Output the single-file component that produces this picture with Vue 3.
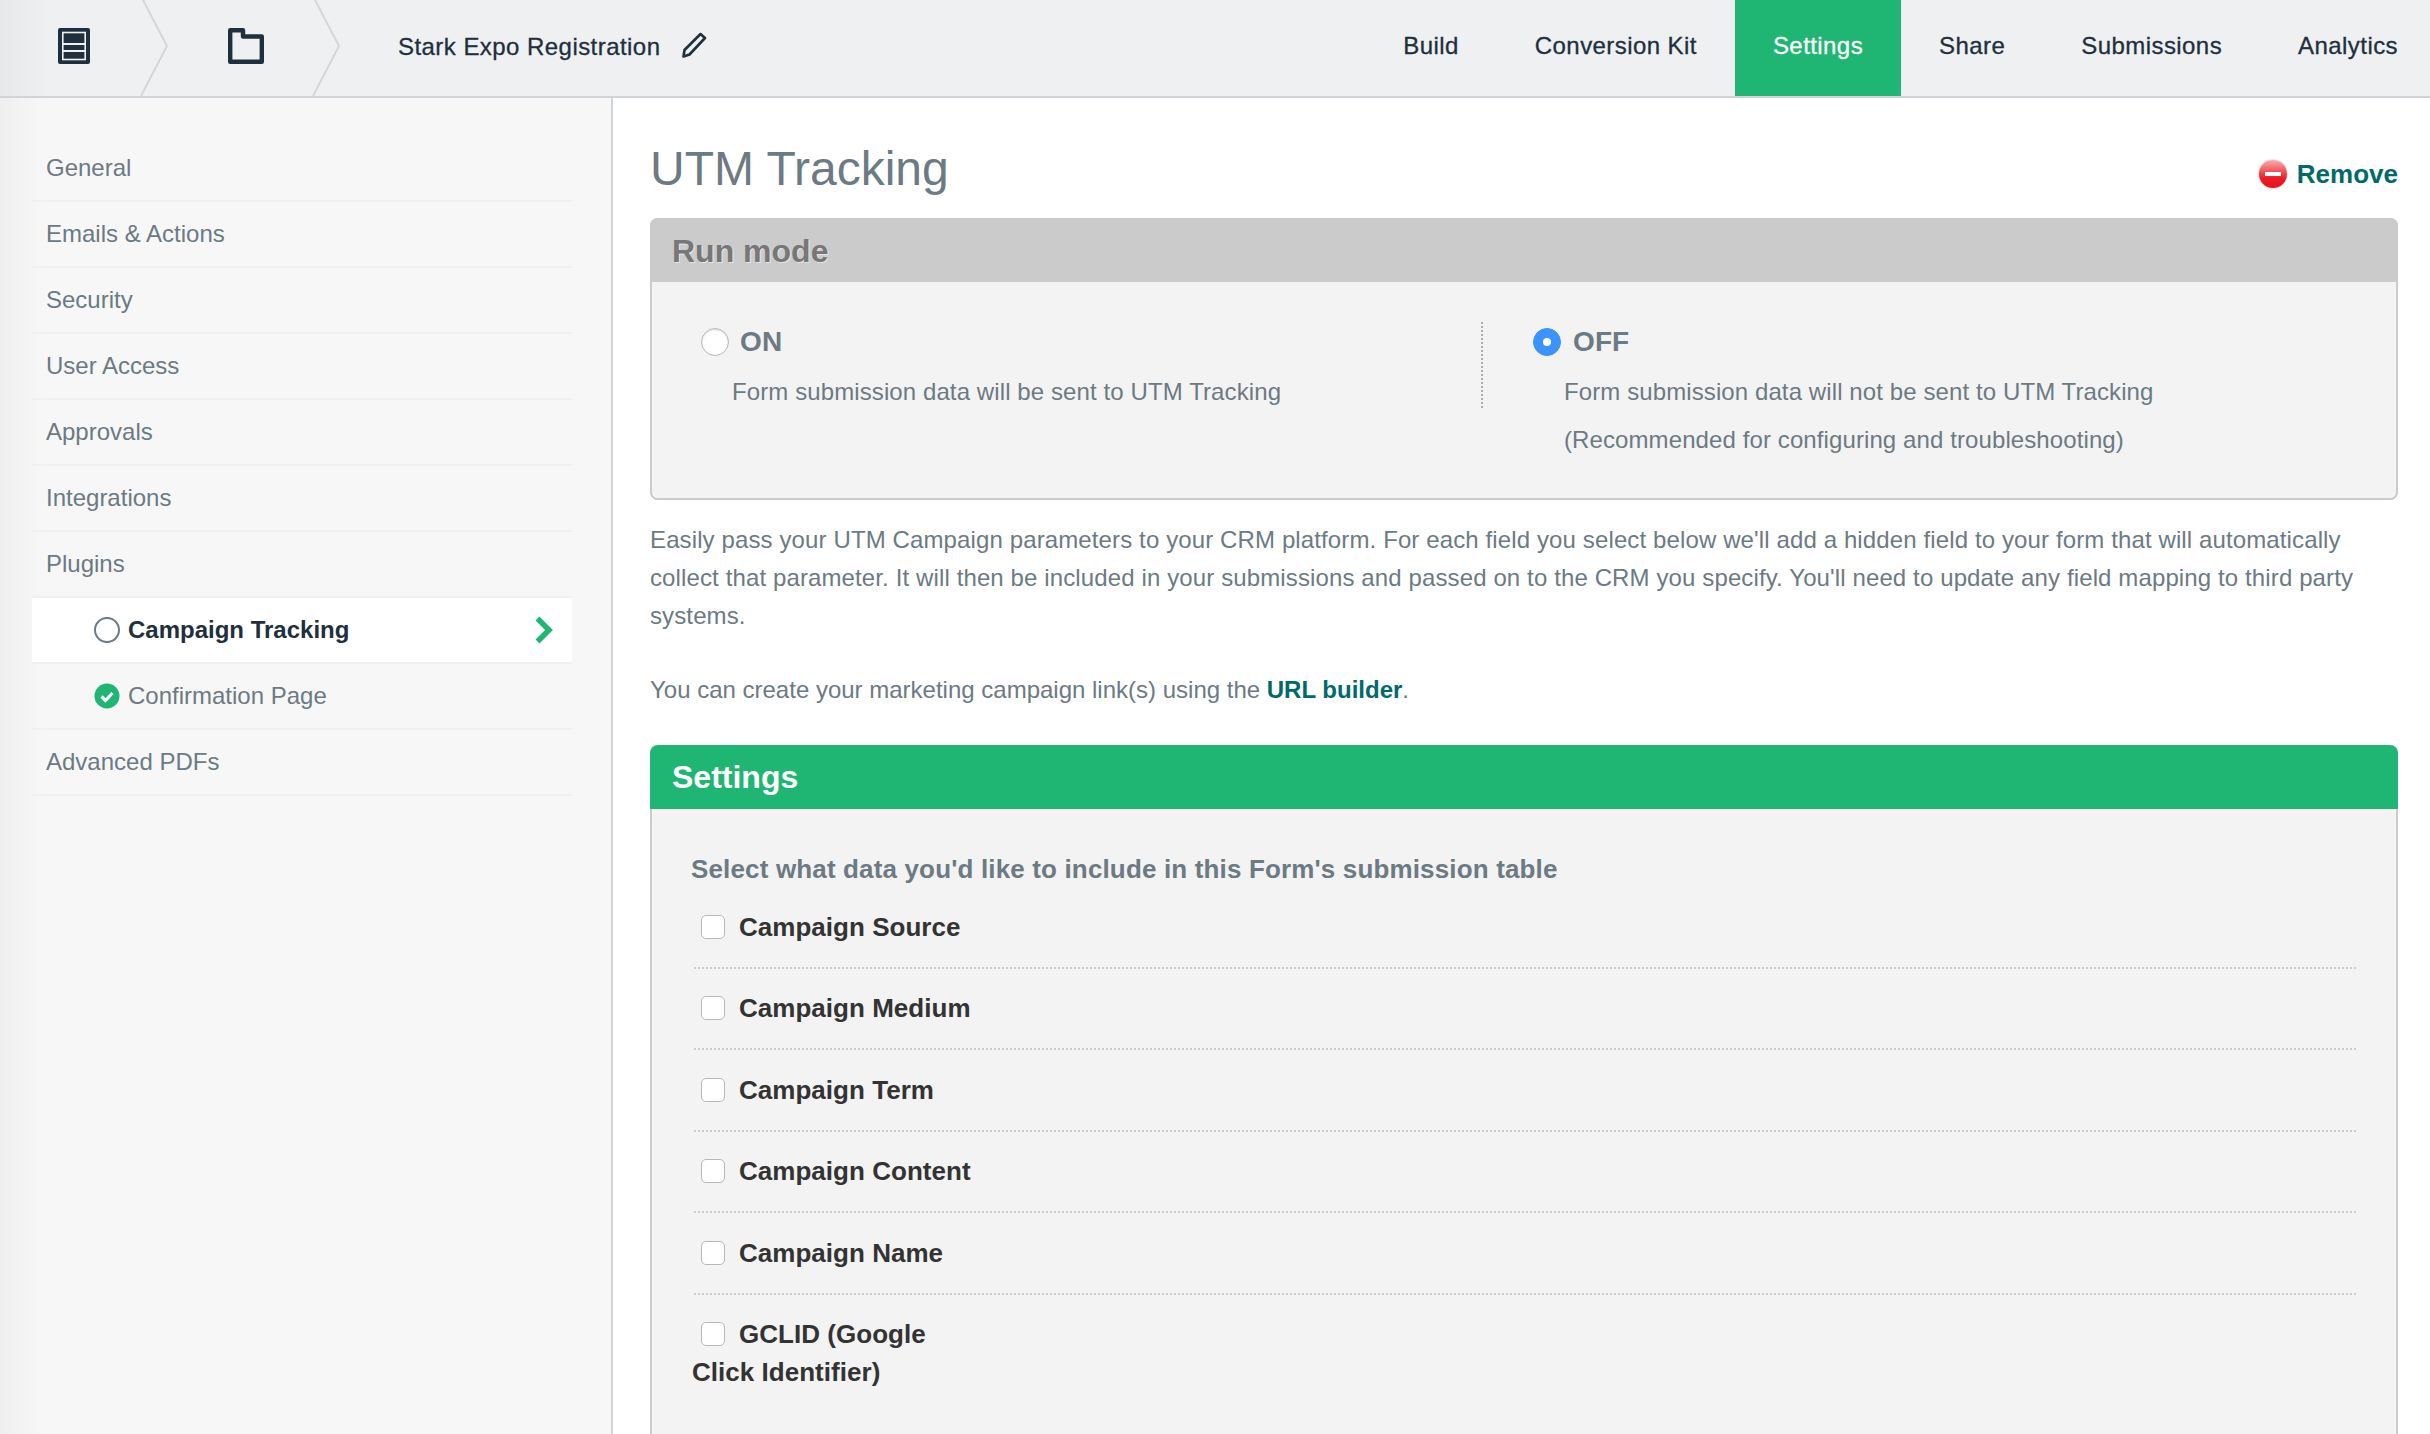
<template>
  <div class="page">
    <header class="topbar">
      <div class="crumbs">
        <div class="crumb first">
          <svg width="32" height="36" viewBox="0 0 32 36">
            <rect width="32" height="36" rx="2" fill="#1f2f3d" />
            <rect x="4.800" y="4.500" width="22.400" height="27" fill="none" stroke="#eef0f2" stroke-width="1.600" />
            <path d="M5 16h22M5 23h22" stroke="#eef0f2" stroke-width="1.800" />
          </svg>
          <svg class="chev" width="28" height="96" viewBox="0 0 28 96">
            <path d="M3 0l24 46L1 96" fill="none" stroke="#d3d7db" stroke-width="2" />
          </svg>
        </div>
        <div class="crumb second">
          <svg width="36" height="36" viewBox="0 0 36 36">
            <path d="M2.200 2.200H15V8.500H33.800V33.800H2.200z" fill="none" stroke="#1f2f3d" stroke-width="4.400" stroke-linejoin="round" />
          </svg>
          <svg class="chev" width="28" height="96" viewBox="0 0 28 96">
            <path d="M3 0l24 46L1 96" fill="none" stroke="#d3d7db" stroke-width="2" />
          </svg>
        </div>
        <div class="form-name">
          <span>Stark Expo Registration</span>
          <svg width="26" height="26" viewBox="0 0 26 26">
            <path d="M19.500 2l4.500 4L8.500 22.500 2.500 24.500l1-6.500z" fill="none" stroke="#1f2f3d" stroke-width="2.600" stroke-linejoin="round" />
          </svg>
        </div>
      </div>
      <nav class="tabs">
        <a v-for="t in tabs" :key="t" class="tab" :class="{ active: t === 'Settings' }">{{ t }}</a>
      </nav>
    </header>

    <div class="body">
      <aside class="sidebar">
        <ul class="menu">
          <li v-for="m in menu" :key="m.label" class="item" :class="{ sub: m.sub, current: m.current }">
            <span v-if="m.sub && m.current" class="ring"></span>
            <svg v-if="m.sub && !m.current" class="ok" width="26" height="26" viewBox="0 0 26 26">
              <circle cx="13" cy="13" r="12.500" fill="#1fb573" />
              <path d="M7.500 13.500l4 4 7-7.500" fill="none" stroke="#fff" stroke-width="3.200" />
            </svg>
            <span class="item-label">{{ m.label }}</span>
            <svg v-if="m.current" class="go" width="20" height="28" viewBox="0 0 20 28">
              <path d="M3.500 2.500L15 14 3.500 25.500" fill="none" stroke="#1fb573" stroke-width="5.500" />
            </svg>
          </li>
        </ul>
      </aside>

      <main class="content">
        <div class="title-row">
          <h1>UTM Tracking</h1>
          <a class="remove">
            <span class="remove-icon"></span>
            Remove
          </a>
        </div>

        <section class="panel run-panel">
          <h2 class="panel-head grey">Run mode</h2>
          <div class="run-body">
            <div class="run-col on-col">
              <div class="run-opt"><span class="radio"></span>ON</div>
              <p>Form submission data will be sent to UTM Tracking</p>
            </div>
            <div class="run-col off-col">
              <div class="run-opt"><span class="radio checked"></span>OFF</div>
              <p>Form submission data will not be sent to UTM Tracking</p>
              <p>(Recommended for configuring and troubleshooting)</p>
            </div>
          </div>
        </section>

        <p class="intro">
          Easily pass your UTM Campaign parameters to your CRM platform. For each field you select below we'll add a hidden field to your form that will automatically collect that parameter. It will then be included in your submissions and passed on to the CRM you specify. You'll need to update any field mapping to third party systems.
        </p>
        <p class="intro link-line">
          You can create your marketing campaign link(s) using the <a>URL builder</a>.
        </p>

        <section class="panel settings-panel">
          <h2 class="panel-head green">Settings</h2>
          <div class="settings-body">
            <h3>Select what data you'd like to include in this Form's submission table</h3>
            <div v-for="f in fields" :key="f" class="field">
              <label><span class="check"></span>{{ f }}</label>
            </div>
          </div>
        </section>
      </main>
    </div>
  </div>
</template>

<script setup>
const tabs = ["Build", "Conversion Kit", "Settings", "Share", "Submissions", "Analytics"]

const menu = [
  { label: "General" },
  { label: "Emails & Actions" },
  { label: "Security" },
  { label: "User Access" },
  { label: "Approvals" },
  { label: "Integrations" },
  { label: "Plugins" },
  { label: "Campaign Tracking", sub: true, current: true },
  { label: "Confirmation Page", sub: true },
  { label: "Advanced PDFs" }
]

const fields = [
  "Campaign Source",
  "Campaign Medium",
  "Campaign Term",
  "Campaign Content",
  "Campaign Name",
  "GCLID (Google Click Identifier)"
]
</script>

<style>
html, body {
  margin: 0;
  background: #fff;
  overflow: hidden;
}
</style>

<style scoped>
.page {
  width: 2430px;
  height: 1434px;
  overflow: hidden;
  font-family: "Liberation Sans", Arial, sans-serif;
  font-size: 24px;
  color: #6c7a83;
}

/* barra superiore */
.topbar {
  display: flex;
  justify-content: space-between;
  height: 96px;
  background: linear-gradient(90deg, #e6e8e9 0, #eef0f2 50px);
  border-bottom: 2px solid #d0d4d8;
}
.crumbs {
  display: flex;
  align-items: center;
}
.crumb {
  position: relative;
  height: 96px;
  display: flex;
  align-items: center;
  padding-bottom: 4px;
  box-sizing: border-box;
}
.crumb.first {
  width: 168px;
  padding-left: 58px;
}
.crumb.second {
  width: 172px;
  padding-left: 60px;
}
.chev {
  position: absolute;
  right: 0;
  top: 0;
}
.form-name {
  display: flex;
  align-items: center;
  gap: 21px;
  margin-left: 58px;
  padding-bottom: 3px;
  color: #1f2f3d;
  letter-spacing: 0.45px;
  -webkit-text-stroke: 0.3px #1f2f3d;
}
.form-name svg {
  margin-top: -3px;
}
.tabs {
  display: flex;
  margin-right: -6px;
}
.tab {
  padding: 0 38px;
  line-height: 92px;
  height: 96px;
  color: #1f2f3d;
  letter-spacing: 0.43px;
  -webkit-text-stroke: 0.3px #1f2f3d;
}
.tab.active {
  background: #1fb573;
  color: #fff;
  -webkit-text-stroke: 0.3px #fff;
}

.body {
  display: flex;
}

/* menu laterale */
.sidebar {
  width: 611px;
  height: 1336px;
  flex: none;
  background: linear-gradient(90deg, #efefef 0, #f7f7f7 45px);
  border-right: 2px solid #d0d4d8;
}
.menu {
  list-style: none;
  margin: 38px 39px 0 32px;
  padding: 0;
}
.item {
  display: flex;
  align-items: center;
  height: 64px;
  padding-left: 14px;
  border-bottom: 2px solid #f0f0f0;
}
.item.sub {
  padding-left: 62px;
}
.item.current {
  background: #fff;
  color: #1f2f3d;
  font-weight: bold;
}
.item-label {
  flex: 1;
}
.ring {
  width: 22px;
  height: 22px;
  border: 2px solid #6c7a83;
  border-radius: 50%;
  margin-right: 8px;
}
.ok {
  margin-right: 8px;
}
.go {
  margin-right: 18px;
}

/* contenuto */
.content {
  flex: 1;
  min-width: 0;
  padding: 0 32px 0 37px;
  letter-spacing: 0.1px;
}
.title-row {
  display: flex;
  justify-content: space-between;
  align-items: flex-end;
  height: 120px;
  letter-spacing: 0;
}
h1 {
  margin: 0 0 21px;
  font-size: 48px;
  font-weight: normal;
  line-height: 56px;
}
.remove {
  display: flex;
  align-items: center;
  gap: 10px;
  margin-bottom: 29px;
  font-size: 26px;
  font-weight: bold;
  line-height: 30px;
  color: #006a68;
}
.remove-icon {
  position: relative;
  width: 28px;
  height: 28px;
  border-radius: 50%;
  background: linear-gradient(180deg, #f9aeb2 0, #f0555c 40%, #ee1c25 65%, #e8121c 100%);
  box-shadow: 0 0 2px #e89a9a;
}
.remove-icon::after {
  content: "";
  position: absolute;
  left: 6px;
  right: 6px;
  top: 12px;
  height: 4px;
  background: #fff;
}

.panel-head {
  margin: 0;
  height: 64px;
  padding-left: 22px;
  font-size: 32px;
  font-weight: bold;
  line-height: 64px;
  border-radius: 8px 8px 0 0;
  letter-spacing: 0;
}
.panel-head.grey {
  background: #cbcbcb;
  color: #777;
  line-height: 66px;
  text-shadow: 1px 1px 0 #e6e6e6;
}
.panel-head.green {
  background: #1fb573;
  color: #fff;
}

.run-panel {
  height: 282px;
  background: #f3f3f3;
  border-radius: 8px;
  box-shadow: inset 2px 0 0 #ccc, inset -2px 0 0 #ccc, inset 0 -2px 0 #ccc;
}
.run-body {
  display: flex;
  padding-top: 40px;
}
.run-col {
  height: 86px;
}
.on-col {
  width: 833px;
  padding-left: 51px;
  box-sizing: border-box;
  border-right: 2px dotted #aaa;
}
.off-col {
  padding-left: 50px;
}
.run-opt {
  display: flex;
  align-items: center;
  gap: 12px;
  height: 36px;
  margin-top: 2px;
  font-size: 28px;
  font-weight: bold;
}
.on-col .run-opt {
  gap: 11px;
}
.run-col p {
  margin: 0;
  line-height: 48px;
  white-space: nowrap;
}
.on-col p {
  margin: 8px 0 0 31px;
}
.off-col p {
  margin-left: 31px;
}
.off-col .run-opt + p {
  margin-top: 8px;
}
.radio {
  width: 26px;
  height: 26px;
  border: 1px solid #b8b8b8;
  border-radius: 50%;
  background: #fff;
  box-shadow: inset 0 1px 2px rgba(0, 0, 0, 0.15);
}
.radio.checked {
  position: relative;
  border-color: #3b93fb;
  background: #3b93fb;
  box-shadow: none;
}
.radio.checked::after {
  content: "";
  position: absolute;
  left: 9px;
  top: 9px;
  width: 8px;
  height: 8px;
  border-radius: 50%;
  background: #fff;
}

.intro {
  margin: 0;
  padding-top: 21px;
  line-height: 38px;
  letter-spacing: 0.12px;
}
.link-line {
  padding-top: 36px;
  letter-spacing: 0;
}
.link-line a {
  color: #006a68;
  font-weight: bold;
}

.settings-panel {
  margin-top: 36px;
}
.settings-body {
  min-height: 700px;
  padding: 41.500px 40px 0 39px;
  background: #f3f3f3;
  border-left: 2px solid #ccc;
  border-right: 2px solid #ccc;
}
h3 {
  margin: 0 0 0.500px;
  font-size: 26px;
  font-weight: bold;
  line-height: 36px;
  letter-spacing: 0.15px;
  color: #6c7a83;
}
.field {
  margin-left: 3px;
  padding: 20.500px 0 21px;
  border-bottom: 2px dotted #ccc;
  color: #333;
  font-size: 26px;
  font-weight: bold;
  line-height: 38px;
  letter-spacing: 0.03px;
}
.field:last-child {
  border-bottom: 0;
}
.field label {
  display: block;
  width: 290px;
  margin-left: -2px;
}
.check {
  display: inline-block;
  width: 22px;
  height: 22px;
  margin: 0 14px 0 9px;
  vertical-align: -3px;
  background: #fff;
  border: 1px solid #b8b8b8;
  border-radius: 5px;
}
</style>
